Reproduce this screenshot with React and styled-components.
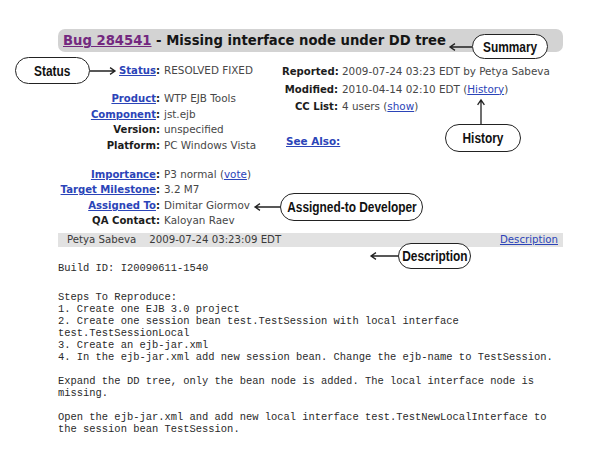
import React from "react"
import styled, { createGlobalStyle } from "styled-components"

const GlobalStyle = createGlobalStyle`
  html, body {
    margin: 0;
    padding: 0;
    background: #fff;
  }
  body {
    font-family: "DejaVu Sans", Verdana, sans-serif;
  }
`

const colors = {
  link: "#2b44b8",
  visited: "#73287f",
  label: "#1c1c1c",
  value: "#474747",
  titleBar: "#d3d3d3",
  commentBar: "#e2e2e2",
}

const Canvas = styled.div`
  position: relative;
  width: 599px;
  height: 453px;
  overflow: hidden;
  background: #fff;
`

const Page = styled.div`
  width: 505px;
  padding: 29px 0 0 58px;
`

const TitleBar = styled.h1`
  margin: 0;
  height: 23px;
  padding-left: 5px;
  background: ${colors.titleBar};
  border-radius: 7px;
  font-size: 13.2px;
  font-weight: bold;
  line-height: 23px;
  color: #151515;
  white-space: nowrap;
`

const Link = styled.a`
  color: ${(p) => (p.$visited ? colors.visited : colors.link)};
  text-decoration: underline;
  cursor: pointer;
`

const Fields = styled.div`
  display: flex;
  margin-top: 11px;
`

const Column = styled.div`
  width: ${(p) => p.$width}px;
  display: flex;
  flex-direction: column;
`

const Row = styled.div`
  display: grid;
  grid-template-columns: ${(p) => p.$labelWidth}px auto;
  column-gap: 4px;
  height: ${(p) => p.$height}px;
  line-height: ${(p) => p.$height}px;
  margin-top: ${(p) => p.$gap || 0}px;
  font-size: 10.4px;
  white-space: nowrap;
`

const Label = styled.span`
  text-align: right;
  font-weight: bold;
  font-size: 10.1px;
  color: ${colors.label};
`

const Value = styled.span`
  color: ${colors.value};
`

const SeeAlso = styled.div`
  margin-top: 17px;
  padding-left: 4px;
  font-size: 10.4px;
  font-weight: bold;
  line-height: 17px;
`

const CommentBar = styled.div`
  display: flex;
  justify-content: space-between;
  margin-top: 4px;
  height: 14px;
  padding: 0 5px 0 9px;
  background: ${colors.commentBar};
  font-size: 10.2px;
  line-height: 14px;
  color: #3a3a3a;
  white-space: pre;
`

const Code = styled.pre`
  margin: 0;
  font-family: "Liberation Mono", "Courier New", monospace;
  font-size: 10.45px;
  line-height: 12px;
  color: #2a2a2a;
`

const BuildLine = styled(Code)`
  margin-top: 15px;
  margin-bottom: 17px;
`

const Callout = styled.div`
  position: absolute;
  left: ${(p) => p.$x}px;
  top: ${(p) => p.$y}px;
  width: ${(p) => p.$w}px;
  height: ${(p) => p.$h}px;
  box-sizing: border-box;
  display: flex;
  align-items: center;
  justify-content: center;
  border: 1.5px solid #222;
  border-radius: 999px;
  background: #fff;
  font-family: "Liberation Sans", Arial, sans-serif;
  font-weight: bold;
  font-size: 14.5px;
  color: #111;
`

const CalloutText = styled.span`
  display: inline-block;
  white-space: nowrap;
  transform: scaleX(0.82);
`

const Arrows = styled.svg`
  position: absolute;
  left: 0;
  top: 0;
  pointer-events: none;
`

const arrow = (x1, y1, x2, y2) => {
  const a = Math.atan2(y2 - y1, x2 - x1)
  const s = 6
  const p1 = [x2 - s * Math.cos(a - 0.6), y2 - s * Math.sin(a - 0.6)]
  const p2 = [x2 - s * Math.cos(a + 0.6), y2 - s * Math.sin(a + 0.6)]
  return `M${x1} ${y1} L${x2} ${y2} M${p1[0]} ${p1[1]} L${x2} ${y2} L${p2[0]} ${p2[1]}`
}

const leftRows = [
  { label: "Status", value: "RESOLVED FIXED", link: true },
  { label: "Product", value: "WTP EJB Tools", link: true, gap: 12.5 },
  { label: "Component", value: "jst.ejb", link: true },
  { label: "Version", value: "unspecified" },
  { label: "Platform", value: "PC Windows Vista" },
  {
    label: "Importance",
    value: (
      <>
        P3 normal (<Link>vote</Link>)
      </>
    ),
    link: true,
    gap: 13.5,
  },
  { label: "Target Milestone", value: "3.2 M7", link: true },
  { label: "Assigned To", value: "Dimitar Giormov", link: true },
  { label: "QA Contact", value: "Kaloyan Raev" },
]

const rightRows = [
  { label: "Reported", value: "2009-07-24 03:23 EDT by Petya Sabeva" },
  {
    label: "Modified",
    value: (
      <>
        2010-04-14 02:10 EDT (<Link>History</Link>)
      </>
    ),
  },
  {
    label: "CC List",
    value: (
      <>
        4 users (<Link>show</Link>)
      </>
    ),
  },
]

const callouts = [
  { text: "Status", x: 15, y: 57, w: 75, h: 27 },
  { text: "Summary", x: 472, y: 34, w: 76, h: 25 },
  { text: "History", x: 445, y: 124, w: 76, h: 28 },
  { text: "Assigned-to Developer", x: 280, y: 193, w: 143, h: 28 },
  { text: "Description", x: 398, y: 243, w: 73, h: 26 },
]

const steps = `Steps To Reproduce:
1. Create one EJB 3.0 project
2. Create one session bean test.TestSession with local interface
test.TestSessionLocal
3. Create an ejb-jar.xml
4. In the ejb-jar.xml add new session bean. Change the ejb-name to TestSession.

Expand the DD tree, only the bean node is added. The local interface node is
missing.

Open the ejb-jar.xml and add new local interface test.TestNewLocalInterface to
the session bean TestSession.`

const App = () => {
  return (
    <Canvas>
      <GlobalStyle />
      <Page>
        <TitleBar>
          <Link $visited>Bug 284541</Link> - Missing interface node under DD tree
        </TitleBar>

        <Fields>
          <Column $width={224}>
            {leftRows.map((r) => (
              <Row key={r.label} $labelWidth={102} $height={15.5} $gap={r.gap}>
                <Label>
                  {r.link ? <Link>{r.label}</Link> : r.label}:
                </Label>
                <Value>{r.value}</Value>
              </Row>
            ))}
          </Column>
          <Column $width={281}>
            {rightRows.map((r) => (
              <Row key={r.label} $labelWidth={56} $height={17.5}>
                <Label>{r.label}:</Label>
                <Value>{r.value}</Value>
              </Row>
            ))}
            <SeeAlso>
              <Link>See Also:</Link>
            </SeeAlso>
          </Column>
        </Fields>

        <CommentBar>
          <span>Petya Sabeva    2009-07-24 03:23:09 EDT</span>
          <Link>Description</Link>
        </CommentBar>

        <BuildLine>Build ID: I20090611-1540</BuildLine>
        <Code>{steps}</Code>
      </Page>

      <Arrows width="599" height="453" fill="none" stroke="#222" strokeWidth="1.3">
        <path d={arrow(90, 71, 115, 71)} />
        <path d={arrow(472, 47, 450, 47)} />
        <path d={arrow(481, 124, 481, 100)} />
        <path d={arrow(280, 207, 255, 207)} />
        <path d={arrow(398, 256, 371, 256)} />
      </Arrows>

      {callouts.map((c) => (
        <Callout key={c.text} $x={c.x} $y={c.y} $w={c.w} $h={c.h}>
          <CalloutText>{c.text}</CalloutText>
        </Callout>
      ))}
    </Canvas>
  )
}

export default App
